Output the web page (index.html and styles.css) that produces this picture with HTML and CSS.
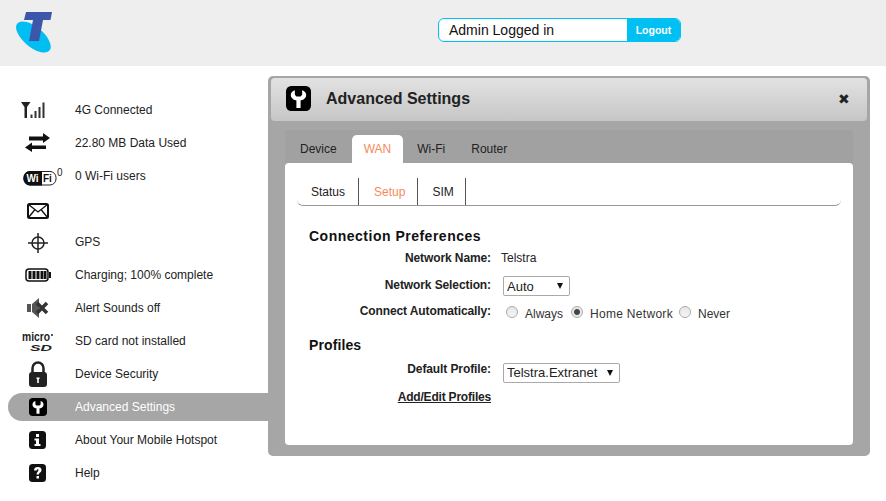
FILE: index.html
```html
<!DOCTYPE html>
<html lang="en">
<head>
    <meta charset="UTF-8">
    <title>Advanced Settings</title>
    <link rel="stylesheet" href="styles.css">
</head>
<body>

    <!-- Top bar -->
    <div class="header">
        <svg class="logo" width="40" height="44" viewBox="0 0 40 44">
            <ellipse cx="18.400" cy="26" rx="21" ry="10" transform="rotate(40 18.400 26)" fill="#00bdf2"/>
            <path d="M11 1 H37 L35.500 9 H28 L24 30 H14 L18 9 H9 Z" fill="#3c57a9"/>
        </svg>
        <div class="login-box">
            <span class="login-text">Admin Logged in</span>
            <button class="logout">Logout</button>
        </div>
    </div>

    <div class="main">
        <!-- Status list on the left -->
        <ul class="sidebar">
            <li>
                <span class="icon">
                    <svg width="34" height="16" viewBox="0 0 34 16"><path d="M0 0 H9.500 L6 5 V16 H3.500 V5 Z" fill="#222"/><path d="M9.500 12.500h2V16h-2zM13.500 9h2v7h-2zM17.500 5h2v11h-2zM21.500 0.500h2V16h-2z" fill="#333"/></svg>
                </span>
                4G Connected
            </li>
            <li>
                <span class="icon">
                    <svg width="26" height="20" viewBox="0 0 26 20"><path d="M4 3.500 H18 V0 L25 5 L18 10 V7.500 H4 Z" fill="#111"/><path d="M21 12.500 H7 V9.500 L0 14.500 L7 19 V16 H21 Z" fill="#111"/></svg>
                </span>
                22.80 MB Data Used
            </li>
            <li>
                <span class="icon">
                    <svg width="50" height="20" viewBox="0 0 50 20"><rect x="11" y="5.500" width="32" height="13.500" rx="6" fill="#fff" stroke="#222" stroke-width="1"/><path d="M17 5 H29 V19.500 H17 A6.500 7 0 0 1 17 5 Z" fill="#111"/><text x="13.500" y="16" class="wifi-text wifi-on">Wi</text><text x="30" y="16" class="wifi-text">Fi</text><text x="44" y="10" class="wifi-count">0</text></svg>
                </span>
                0 Wi-Fi users
            </li>
            <li>
                <span class="icon">
                    <svg width="22" height="20" viewBox="0 0 22 20"><rect x="1" y="5" width="20" height="14" rx="1.500" fill="#fff" stroke="#111" stroke-width="2"/><path d="M1.500 5.500 L11 13 L20.500 5.500 M1.500 18.500 L8 10.500 M20.500 18.500 L14 10.500" fill="none" stroke="#111" stroke-width="1.300"/></svg>
                </span>
            </li>
            <li>
                <span class="icon">
                    <svg width="20" height="22" viewBox="0 0 20 22"><circle cx="10" cy="12" r="6" fill="none" stroke="#222" stroke-width="1.500"/><path d="M10 2v20M0 12h20" stroke="#222" stroke-width="1.500"/></svg>
                </span>
                GPS
            </li>
            <li>
                <span class="icon">
                    <svg width="26" height="14" viewBox="0 0 26 14"><rect x="1" y="1" width="22" height="12" rx="3" fill="#fff" stroke="#111" stroke-width="1.500"/><path d="M3.500 3h3v8h-3zM7.500 3h3v8h-3zM11.500 3h3v8h-3zM15.500 3h3v8h-3zM19 3h2.500v8H19z" fill="#111"/><path d="M24 4h2v6h-2z" fill="#111"/></svg>
                </span>
                Charging; 100% complete
            </li>
            <li>
                <span class="icon">
                    <svg width="22" height="22" viewBox="0 0 22 22"><path d="M0 7h4v8H0zM5 7l7-6v20l-7-6z" fill="#555"/><path d="M10 6l10 10M20 6L10 16" stroke="#333" stroke-width="3.500"/></svg>
                </span>
                Alert Sounds off
            </li>
            <li>
                <span class="icon">
                    <svg width="32" height="22" viewBox="0 0 32 22"><text x="0" y="11" class="micro-text" textLength="28" lengthAdjust="spacingAndGlyphs">micro</text><circle cx="30" cy="5" r="1" fill="#222"/><text x="8" y="21" class="sd-text" textLength="22" lengthAdjust="spacingAndGlyphs">SD</text></svg>
                </span>
                SD card not installed
            </li>
            <li>
                <span class="icon">
                    <svg width="18" height="26" viewBox="0 0 18 26"><path d="M3.500 13V7a5.500 5.500 0 0 1 11 0V13" fill="none" stroke="#222" stroke-width="2.500"/><rect y="11" width="18" height="15" rx="3" fill="#222"/><path d="M7.500 16.500h3v1.500h-.7v4h-1.600v-4h-.7z" fill="#fff"/></svg>
                </span>
                Device Security
            </li>
            <li class="selected">
                <span class="icon">
                    <svg width="18" height="18" viewBox="0 0 24 24"><use href="#wrench"/></svg>
                </span>
                Advanced Settings
            </li>
            <li>
                <span class="icon">
                    <svg width="18" height="18" viewBox="0 0 18 18"><rect width="17" height="18" rx="3.500" fill="#111"/><path d="M7 3h3v3H7zM5.500 7.500H10V13h1.500v2h-6v-2H7V9.500H5.500z" fill="#fff"/></svg>
                </span>
                About Your Mobile Hotspot
            </li>
            <li>
                <span class="icon">
                    <svg width="18" height="18" viewBox="0 0 18 18"><rect width="17" height="18" rx="3.500" fill="#111"/><path d="M5 6.500C5 4 6.500 3 8.800 3s3.700 1.200 3.700 3c0 2.500-2.500 2.500-2.500 4.500H7.500C7.500 8 9.500 7.500 9.500 6.200c0-.7-.3-1-.8-1-.6 0-.9.500-.9 1.300zM7.500 12H10v2.500H7.500z" fill="#fff"/></svg>
                </span>
                Help
            </li>
        </ul>

        <!-- Settings window -->
        <div class="panel">
            <div class="panel-title">
                <svg class="panel-icon" width="25" height="25" viewBox="0 0 24 24">
                    <symbol id="wrench" viewBox="0 0 24 24">
                        <rect width="24" height="24" rx="5" fill="#000"/>
                        <path d="M8.500 4 C5 5 4 8 5 10.500 C6 12.500 8 13.500 10 13.800 V21 H14 V13.800 C16 13.500 18 12.500 19 10.500 C20 8 19 5 15.500 4 V8.500 L14 10 H10 L8.500 8.500 Z" fill="#fff"/>
                    </symbol>
                    <use href="#wrench"/>
                </svg>
                <h1>Advanced Settings</h1>
                <span class="close">&#10006;</span>
            </div>

            <div class="panel-body">
                <div class="tabs">
                    <a class="tab">Device</a>
                    <a class="tab active">WAN</a>
                    <a class="tab">Wi-Fi</a>
                    <a class="tab">Router</a>
                </div>
                <div class="content">
                    <div class="subtabs">
                        <a class="subtab">Status</a>
                        <a class="subtab active">Setup</a>
                        <a class="subtab">SIM</a>
                    </div>

                    <h2>Connection Preferences</h2>
                    <div class="form-row row-name">
                        <label>Network Name:</label>
                        <span class="value">Telstra</span>
                    </div>
                    <div class="form-row row-select">
                        <label>Network Selection:</label>
                        <span class="select-wrap"><select class="select-auto"><option>Auto</option></select></span>
                    </div>
                    <div class="form-row row-radio">
                        <label>Connect Automatically:</label>
                        <div class="radios">
                            <input type="radio" name="connect" id="always"><label for="always">Always</label>
                            <input type="radio" name="connect" id="home" checked><label for="home" class="home-label">Home Network</label>
                            <input type="radio" name="connect" id="never"><label for="never">Never</label>
                        </div>
                    </div>

                    <h2 class="second">Profiles</h2>
                    <div class="form-row row-profile">
                        <label>Default Profile:</label>
                        <span class="select-wrap"><select class="select-profile"><option>Telstra.Extranet</option></select></span>
                    </div>
                    <div class="form-row row-link">
                        <a class="edit-link" href="#">Add/Edit Profiles</a>
                    </div>
                </div>
            </div>
        </div>
    </div>

</body>
</html>
```

FILE: styles.css
```css
html, body {
    margin: 0;
    padding: 0;
    height: 501px;
    overflow: hidden;
}
body {
    font-family: "Liberation Sans", Arial, sans-serif;
    font-size: 12px;
    color: #222;
    background-color: #fff;
}

/* Header */
.header {
    height: 66px;
    background-color: #eee;
    display: flex;
    align-items: flex-start;
}
.logo {
    margin: 11px 0 0 15px;
}
.login-box {
    display: flex;
    width: 243px;
    height: 24px;
    margin: 18px 0 0 383px;
    box-sizing: border-box;
    border: 1px solid #00c0f3;
    border-radius: 6px;
    background-color: #fff;
    overflow: hidden;
}
.login-text {
    flex: 1;
    padding-left: 10px;
    font-size: 14px;
    line-height: 22px;
    color: #111;
}
.logout {
    width: 53px;
    border: none;
    padding: 0;
    background-color: #00c0f3;
    color: #fff;
    font-family: inherit;
    font-size: 10.500px;
    font-weight: bold;
}

.main {
    display: flex;
    align-items: flex-start;
}

/* Left list */
.sidebar {
    list-style: none;
    width: 260px;
    margin: 30px 0 0 8px;
    padding: 0;
}
.sidebar li {
    height: 28px;
    margin-bottom: 5px;
    display: flex;
    align-items: center;
    border-radius: 14px 0 0 14px;
}
.sidebar li.selected {
    background-color: #a6a6a6;
    color: #fff;
}
.icon {
    width: 60px;
    margin-left: 7px;
    display: flex;
    justify-content: center;
    flex: none;
}
.icon svg {
    display: block;
    flex: none;
    margin-right: 14px;
}
.wifi-text {
    font-size: 10px;
    font-weight: bold;
    fill: #111;
}
.wifi-on {
    fill: #fff;
}
.wifi-count {
    font-size: 10px;
    fill: #222;
}
.micro-text {
    font-size: 12px;
    font-weight: bold;
    fill: #222;
}
.sd-text {
    font-size: 9px;
    font-weight: bold;
    font-style: italic;
    fill: #222;
}

/* Settings window */
.panel {
    width: 602px;
    height: 380px;
    margin-top: 10px;
    background-color: #a6a6a6;
    border-radius: 5px;
    box-sizing: border-box;
    padding: 2px 3px 0;
}
.panel-title {
    height: 43px;
    box-sizing: border-box;
    display: flex;
    align-items: center;
    padding: 0 17px 2px 15px;
    border-radius: 4px;
    background: linear-gradient(#e2e2e2, #c6c6c6);
}
.panel-title h1 {
    flex: 1;
    margin: 0 0 0 15px;
    font-size: 16px;
    color: #222;
}
.close {
    font-size: 14px;
    color: #222;
}
.panel-body {
    margin: 9px 14px 0;
}
.tabs {
    display: flex;
    height: 33px;
    padding-top: 5px;
    box-sizing: border-box;
    background-color: #a1a1a1;
    border-radius: 3px 3px 0 0;
}
.tab {
    padding: 0 13px;
    line-height: 28px;
    color: #222;
}
.tab:first-child {
    padding: 0 15px;
}
.tab.active {
    padding: 0 12px;
    margin-right: 1px;
    background-color: #fff;
    color: #f58a5b;
    border-radius: 5px 5px 0 0;
}
.content {
    height: 282px;
    background-color: #fff;
    border-radius: 4px;
    box-sizing: border-box;
    padding: 15px 12px 0;
}
.subtabs {
    display: flex;
    height: 27px;
    border-bottom: 1px solid #999;
    border-radius: 0 0 6px 6px;
}
.subtab {
    padding: 0 13px 0 14px;
    line-height: 29px;
    color: #222;
    border-right: 1px solid #555;
}
.subtab.active {
    padding: 0 12px 0 15px;
    color: #f58a5b;
}
.subtab:last-child {
    padding-right: 11px;
}
h2 {
    margin: 22px 0 0 12px;
    font-size: 14px;
    line-height: 16px;
    letter-spacing: 0.500px;
    color: #111;
}
h2.second {
    margin-top: 13px;
    letter-spacing: 0.100px;
}

/* Form rows */
.form-row {
    display: flex;
    align-items: center;
    height: 26px;
}
.form-row > label {
    width: 194px;
    text-align: right;
    font-weight: bold;
    letter-spacing: -0.100px;
    color: #222;
    flex: none;
}
.value {
    margin-left: 10px;
}
.row-name {
    height: 20px;
    margin-top: 4px;
}
.row-select {
    margin-top: 4px;
}
.select-wrap {
    position: relative;
    margin-left: 12px;
}
.row-select .select-wrap {
    margin-top: 2px;
}
.select-wrap::after {
    content: "";
    position: absolute;
    right: 7px;
    top: 7px;
    border-left: 3.500px solid transparent;
    border-right: 3.500px solid transparent;
    border-top: 6px solid #111;
    pointer-events: none;
}
select {
    appearance: none;
    display: block;
    height: 20px;
    padding: 0 0 0 3px;
    border: 1px solid #aaa;
    border-radius: 2px;
    background-color: #fff;
    font-family: inherit;
    font-size: 13px;
    color: #222;
}
.select-auto {
    width: 67px;
}
.select-profile {
    width: 117px;
}
.radios {
    display: flex;
    align-items: center;
    margin-left: 15px;
    padding-top: 5px;
}
.radios label {
    margin-right: 8px;
    color: #333;
}
.radios .home-label {
    letter-spacing: 0.300px;
    margin-right: 6px;
}
input[type="radio"] {
    appearance: none;
    width: 12px;
    height: 12px;
    margin: 0 7px 3px 0;
    border: 1px solid #aaa;
    border-radius: 50%;
    background: linear-gradient(#e6e6e6, #f6f6f6);
}
input[type="radio"]:checked {
    background: radial-gradient(circle, #444 0 2.500px, #e8e8e8 3.500px);
}
.row-profile {
    height: 27px;
    margin-top: 6px;
}
.row-profile > label {
    margin-bottom: 8px;
}
.row-link {
    justify-content: flex-end;
    width: 194px;
    height: 22px;
}
.edit-link {
    font-weight: bold;
    letter-spacing: -0.200px;
    color: #222;
}
```
